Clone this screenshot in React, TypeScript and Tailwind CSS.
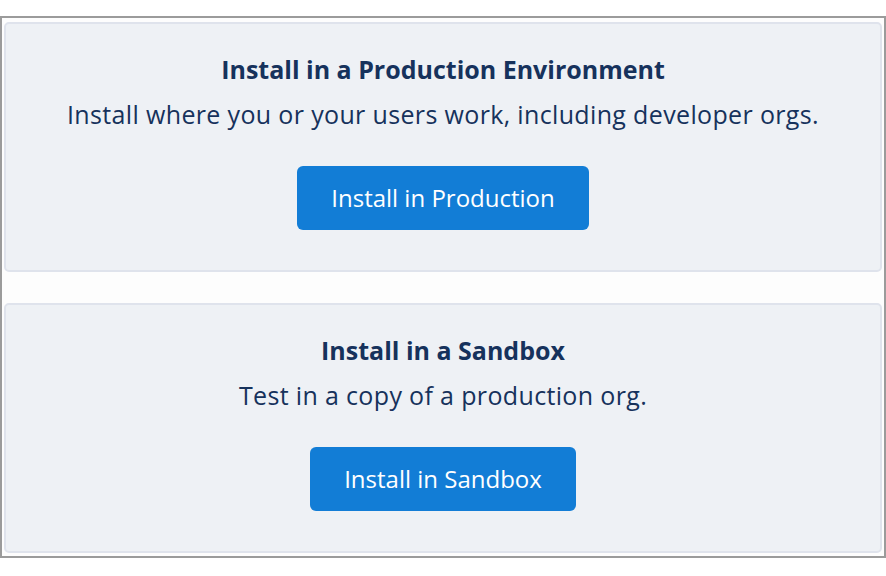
import React from "react";

type Option = {
  title: string;
  description: string;
  action: string;
};

const options: Option[] = [
  {
    title: "Install in a Production Environment",
    description: "Install where you or your users work, including developer orgs.",
    action: "Install in Production",
  },
  {
    title: "Install in a Sandbox",
    description: "Test in a copy of a production org.",
    action: "Install in Sandbox",
  },
];

const InstallCard = ({ title, description, action }: Option) => (
  <div className="flex h-[250px] flex-col items-center rounded-[5px] border-2 border-[#dfe3ec] bg-[#eef1f5] pt-[29px] text-center">
    <h2 className="text-[25px] leading-[32px] font-bold text-[#16325c]">{title}</h2>
    <p className="mt-[13px] text-[25px] leading-[32px] tracking-[0.35px] text-[#16325c]">
      {description}
    </p>
    <button
      type="button"
      className="mt-[36px] h-[64px] rounded-[6px] bg-[#127dd6] px-[34px] text-[24px] font-medium text-white"
    >
      {action}
    </button>
  </div>
);

export default function App() {
  return (
    <div
      className="h-[576px] w-[886px] bg-white pt-4"
      style={{ fontFamily: '"Open Sans", "Noto Sans", sans-serif' }}
    >
      <div className="flex h-[542px] flex-col gap-[31px] border-2 border-[#9b9b9b] bg-[#fdfdfd] px-[2px] pt-[4px]">
        {options.map((o) => (
          <InstallCard key={o.action} {...o} />
        ))}
      </div>
    </div>
  );
}
